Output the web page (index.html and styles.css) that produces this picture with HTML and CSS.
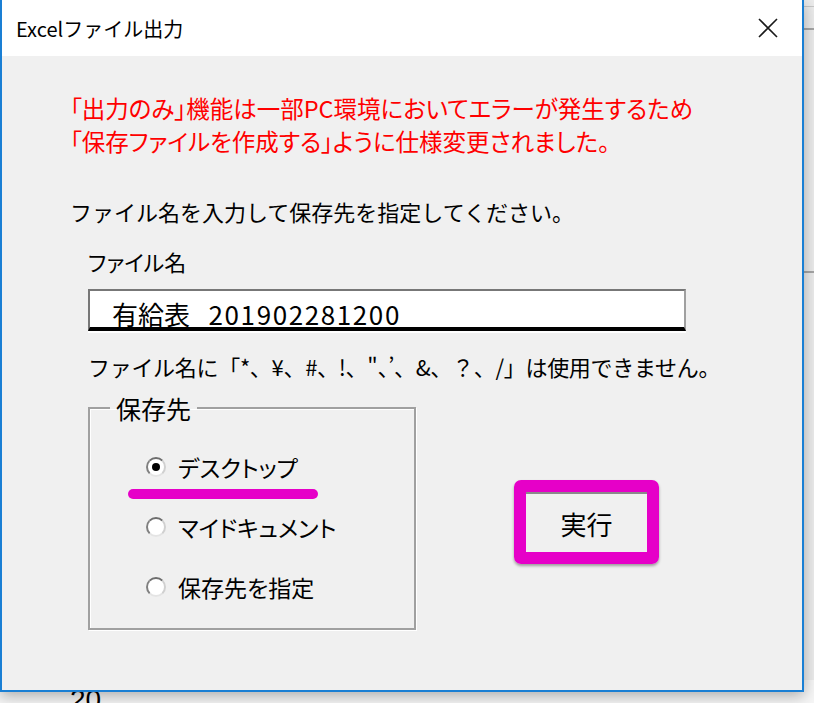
FILE: index.html
```html
<!DOCTYPE html>
<html lang="ja">
<head>
    <meta charset="UTF-8">
    <title>Excelファイル出力</title>
    <link rel="stylesheet" href="styles.css">
</head>
<body>
    <div class="window">
        <div class="titlebar">
            <span class="title">Excelファイル出力</span>
            <svg class="close" width="20" height="20" viewBox="0 0 20 20">
                <path d="M1 1L19 19M19 1L1 19" stroke="#1a1a1a" stroke-width="1.6" fill="none"/>
            </svg>
        </div>
        <div class="content">
            <p class="notice">「出力のみ」機能は一部PC環境においてエラーが発生するため<br>「保存ファイルを作成する」ように仕様変更されました。</p>
            <p class="lead">ファイル名を入力して保存先を指定してください。</p>
            <div class="field">
                <div class="field-label">ファイル名</div>
                <div class="filename">有給表_<span class="digits">201902281200</span></div>
                <p class="warn">ファイル名に「*、¥、#、!、"、’、&amp;、？、/」は使用できません。</p>
                <div class="row">
                    <fieldset class="dest">
                        <legend>保存先</legend>
                        <div class="options">
                            <div class="option"><span class="radio checked"></span>デスクトップ<span class="mark"></span></div>
                            <div class="option"><span class="radio"></span>マイドキュメント</div>
                            <div class="option"><span class="radio"></span>保存先を指定</div>
                        </div>
                    </fieldset>
                    <div class="exec-mark"><button class="exec">実行</button></div>
                </div>
            </div>
        </div>
    </div>
    <div class="sheet-row">20</div>
</body>
</html>
```

FILE: styles.css
```css
/* Page behind the dialog (Excel sheet) */
body {
    margin: 0;
    width: 814px;
    height: 703px;
    overflow: hidden;
    font-family: "Noto Sans CJK JP", "Noto Sans", sans-serif;
    color: #000;
    background:
        linear-gradient(#c8c8c8, #c8c8c8) 0 6px / 100% 1px no-repeat,
        linear-gradient(#a6a6a6, #a6a6a6) 0 28px / 100% 2px no-repeat,
        linear-gradient(#a6a6a6, #a6a6a6) 0 271px / 100% 2px no-repeat,
        #ececec;
}

.window {
    width: 804px;
    height: 692px;
    box-sizing: border-box;
    border: 2px solid #1a7fd4;
    border-top: 0;
    background-color: #f0f0f0;
    position: relative;
    z-index: 1;
    box-shadow: 0 4px 14px rgba(0, 0, 0, 0.3);
}

.titlebar {
    height: 56px;
    background-color: #fff;
    display: flex;
    align-items: center;
    justify-content: space-between;
    padding: 0 24px 0 14px;
}

.title {
    font-size: 20px;
}

.close {
    display: block;
}

.content {
    padding: 36px 0 0 68px;
}

.notice {
    margin: 0;
    font-size: 23.5px;
    line-height: 33px;
    font-feature-settings: "palt";
    color: #ff0000;
}

.lead {
    margin: 37px 0 0;
    font-size: 22px;
    line-height: 33px;
}

.field {
    padding-left: 18px;
}

.field-label {
    margin-top: 17px;
    font-size: 22px;
    line-height: 33px;
    font-feature-settings: "palt";
}

.filename {
    margin-top: 11px;
    width: 598px;
    height: 42px;
    box-sizing: border-box;
    background-color: #fff;
    border-top: 2px solid #777;
    border-left: 2px solid #777;
    border-right: 2px solid #a0a0a0;
    border-bottom: 4px solid #000;
    box-shadow: 0 2px 0 #fff;
    padding: 6px 0 0 22px;
    font-size: 26px;
    line-height: 34px;
    overflow: hidden;
    white-space: nowrap;
}

.digits {
    margin-left: 4px;
    letter-spacing: 1.6px;
}

.warn {
    margin: 19px 0 0;
    font-size: 22px;
    line-height: 33px;
    letter-spacing: -0.3px;
    white-space: nowrap;
}

.row {
    display: flex;
    align-items: flex-start;
    margin-top: 12px;
}

.dest {
    margin: 0;
    padding: 0 0 11px;
    width: 328px;
    box-sizing: border-box;
    min-width: 0;
    border: 2px solid #a0a0a0;
    box-shadow: 1px 1px 0 #fff, inset 1px 1px 0 #fff;
}

.dest legend {
    margin-left: 20px;
    padding: 0 6px;
    font-size: 25px;
    line-height: 26px;
}

.options {
    padding-top: 16px;
}

.option {
    height: 60px;
    display: flex;
    align-items: center;
    padding-left: 56px;
    font-size: 23px;
    font-feature-settings: "palt";
    position: relative;
}

.radio {
    width: 20px;
    height: 20px;
    box-sizing: border-box;
    border-radius: 50%;
    border: 2px solid;
    border-color: #6e6e6e #d0d0d0 #e4e4e4 #808080;
    background-color: #fff;
    margin-right: 12px;
    display: flex;
    align-items: center;
    justify-content: center;
}

.radio.checked::after {
    content: "";
    width: 8px;
    height: 8px;
    border-radius: 50%;
    background-color: #000;
}

/* magenta annotation under the selected option */
.mark {
    position: absolute;
    left: 38px;
    top: 52px;
    width: 190px;
    height: 10px;
    border-radius: 5px;
    background-color: #e600c8;
}

.exec-mark {
    margin: 85px 0 0 98px;
    border: 12px solid #e600c8;
    border-radius: 7px;
    box-shadow: 0 2px 3px rgba(0, 0, 0, 0.35);
}

.exec {
    display: block;
    width: 121px;
    height: 60px;
    padding: 0;
    border: 0;
    border-top: 2px solid #8a8a8a;
    background-color: #f0f0f0;
    font-family: inherit;
    font-size: 26px;
    color: #000;
}

.sheet-row {
    margin-top: -12px;
    padding-left: 70px;
    font-family: "Liberation Sans", sans-serif;
    font-size: 28px;
    line-height: 40px;
    background-color: #f6f6f6;
}
```
